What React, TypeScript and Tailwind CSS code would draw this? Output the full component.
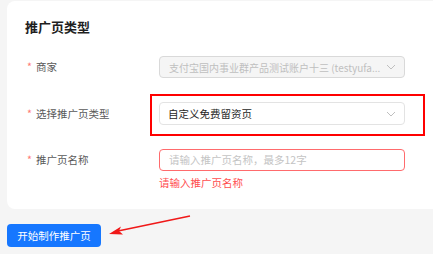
import React from "react";

function Chevron() {
  return (
    <svg width="10" height="6" viewBox="0 0 10 6" className="shrink-0" aria-hidden="true">
      <path d="M1 1 L5 5 L9 1" fill="none" stroke="#bfbfbf" strokeWidth="1" />
    </svg>
  );
}

function Label({ text }: { text: string }) {
  return (
    <div className="flex w-[132px] shrink-0 items-center text-[10.5px] text-[#595959]">
      <span className="mr-[4px] text-[#ff7875]">*</span>
      {text}
    </div>
  );
}

export default function App() {
  return (
    <div
      className="relative h-[254px] w-[433px] overflow-hidden bg-[#f5f5f5] pl-[7px] pt-[1px]"
      style={{ fontFamily: '"Noto Sans CJK SC", "Noto Sans", sans-serif' }}
    >
      <div className="w-[440px] rounded-lg bg-white pb-[20px] pl-[18px] pt-[16px]">
        <h1 className="text-[13px] font-bold leading-[20px] text-[#1f1f1f]">推广页类型</h1>

        <div className="mt-[19px] flex h-[22px] items-center pl-[2px]">
          <Label text="商家" />
          <div className="flex h-[22px] w-[246px] items-center justify-between rounded-[4px] border border-[#d9d9d9] bg-[#f5f5f5] pl-[9px] pr-[8px] text-[10px] text-[#bfbfbf]">
            <span className="whitespace-nowrap">支付宝国内事业群产品测试账户十三 (testyufa...</span>
            <Chevron />
          </div>
        </div>

        <div className="mt-[24px] flex h-[23px] items-center pl-[2px]">
          <Label text="选择推广页类型" />
          <div className="flex h-[23px] w-[246px] items-center justify-between rounded-[4px] border border-[#e3e3e3] bg-white pl-[8px] pr-[8px] text-[10.5px] text-[#262626]">
            <span>自定义免费留资页</span>
            <Chevron />
          </div>
        </div>

        <div className="mt-[24px] flex h-[22px] items-center pl-[2px]">
          <Label text="推广页名称" />
          <div className="flex h-[22px] w-[246px] items-center rounded-[4px] border border-[#ff6b6d] bg-white pl-[9px] text-[10.5px] text-[#c4c4c4]">
            请输入推广页名称，最多12字
          </div>
        </div>
        <div className="mt-[5px] pl-[134px] text-[10.5px] leading-[13px] text-[#ff4d4f]">请输入推广页名称</div>
      </div>

      <button className="mt-[15px] flex h-[23px] w-[94px] items-center justify-center rounded-[4px] bg-[#1677ff] text-[10.5px] text-white">
        开始制作推广页
      </button>

      <div className="absolute left-[150px] top-[94px] h-[42px] w-[275px] border-2 border-[#ff0000]" />

      <svg className="absolute left-[104px] top-[210px]" width="92" height="30" viewBox="0 0 92 30" aria-hidden="true">
        <path d="M86 6 L14 21" stroke="#f01818" strokeWidth="1.6" fill="none" />
        <path d="M5 24 L17 16.5 L15 21 L19 24.5 Z" fill="#f01818" />
      </svg>
    </div>
  );
}
